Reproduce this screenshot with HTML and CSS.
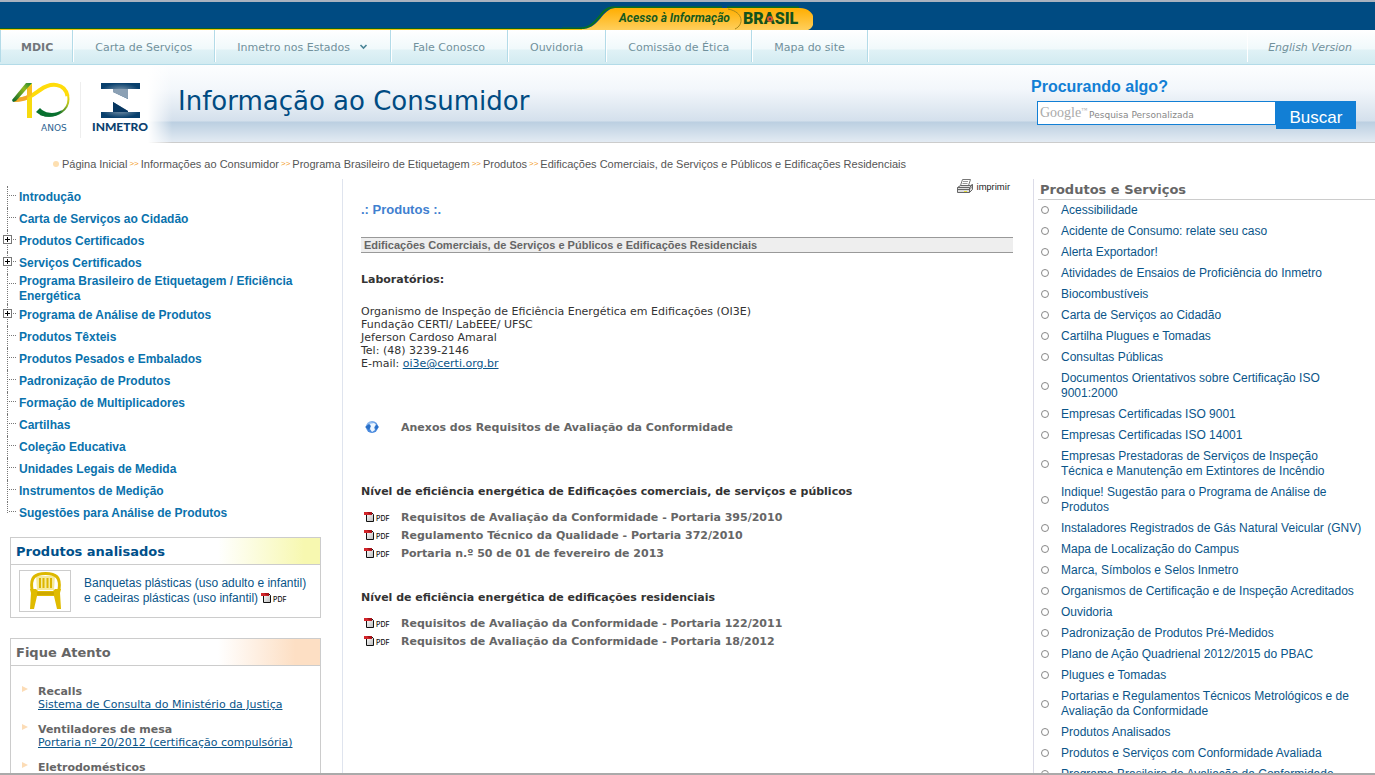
FILE: index.html
```html
<!DOCTYPE html>
<html lang="pt-BR">
<head>
<meta charset="utf-8">
<title>Inmetro - Informação ao Consumidor</title>
<link rel="stylesheet" href="styles.css">
</head>
<body>
<svg class="defs" aria-hidden="true">
  <defs>
    <linearGradient id="page-shade" x1="0" y1="0" x2="1" y2="1"><stop offset="0" stop-color="#fff"/><stop offset="1" stop-color="#bbb"/></linearGradient>
    <symbol id="pdf" viewBox="0 0 28 13">
      <path d="M2.500 1.500h5l2 2v7h-7z" fill="url(#page-shade)" stroke="#111"/>
      <path d="M0 1h8v3H0z" fill="#d3262b"/><path d="M3 1h5v3l-3-1z" fill="#a81218"/>
      <text x="12" y="10" class="pdf-text">PDF</text>
    </symbol>
  </defs>
</svg>
<div class="page">
  <div class="gov-bar">
    <div class="gov-line"></div>
    <a href="#" class="gov-link" aria-label="Acesso à Informação - Brasil">
      <svg width="251" height="28" viewBox="0 0 251 28">
        <defs><linearGradient id="gold" x1="0" y1="0" x2="0" y2="1"><stop offset="0" stop-color="#ffae00"/><stop offset="1" stop-color="#ffcf5c"/></linearGradient></defs>
        <path d="M0 26.500H18C36 26 38 6 50 5.500H160" fill="none" stroke="#0a7020" stroke-width="2"/>
        <path d="M165 5.500H237" stroke="#0a7020" stroke-width="2"/>
        <path d="M164 6H238C256 7 254 26 246 28H164z" fill="url(#gold)"/>
        <path d="M0 27H22C38 25 40 7 53 6H164C185 7 184 26 172 28H0z" fill="url(#gold)"/>
        <path d="M0 26H18V28H0z" fill="#004b82"/><path d="M0 26.500H20" stroke="#096320"/><path d="M0 27.500H20" stroke="#f2c20c"/>
        <path d="M166 7C182 10 182 23 173 27" fill="none" stroke="#a98718"/>
        <text x="57" y="20" class="gov-text">Acesso à Informação</text>
        <text x="181" y="22" class="brasil-text">BRASIL</text>
        <circle cx="208" cy="17" r="3" fill="#d9552b"/><circle cx="208" cy="17" r="1" fill="#173d66"/>
      </svg>
    </a>
    <div class="gov-rest"></div>
  </div>
  <nav class="top-nav">
    <a href="#" class="strong">MDIC</a>
    <a href="#">Carta de Serviços</a>
    <a href="#">Inmetro nos Estados <svg width="9" height="6" viewBox="0 0 9 6"><path d="M1.500 1l3 3 3-3" fill="none" stroke="#4a8597" stroke-width="1.600"/></svg></a>
    <a href="#">Fale Conosco</a>
    <a href="#">Ouvidoria</a>
    <a href="#">Comissão de Ética</a>
    <a href="#">Mapa do site</a>
    <a href="#" class="english">English Version</a>
  </nav>
  <header class="banner">
    <div class="logos">
      <svg width="58" height="56" viewBox="0 0 58 56" role="img" aria-label="Inmetro 40 anos">
        <defs>
          <linearGradient id="g40" x1="0" y1="1" x2="1" y2="0"><stop offset="0" stop-color="#00602c"/><stop offset=".65" stop-color="#8fb91e"/><stop offset="1" stop-color="#15803a"/></linearGradient>
          <linearGradient id="loop" x1="0" y1="0" x2="0" y2="1"><stop offset="0" stop-color="#ffdc0a"/><stop offset=".5" stop-color="#a7bd20"/><stop offset="1" stop-color="#086b30"/></linearGradient>
        </defs>
        <path d="M2 18C17 17 21 13 28 8 39 0 53 1 55.500 14" fill="none" stroke="#ffdc0a" stroke-width="4"/>
        <path d="M2 18C8 18 12 17 16 15" fill="none" stroke="#f3a62b" stroke-width="4"/>
        <path d="M15 5l5-4v35h-5z" fill="#f7da0e"/><path d="M15 6l5-3v10l-5 3z" fill="#f9bd20"/>
        <path d="M0 18L14 1h6L4 19 1 20z" fill="url(#g40)"/>
        <path d="M56 13C59 27 45 38 28 32" fill="none" stroke="url(#loop)" stroke-width="2"/>
        <path d="M24 30l4-4c4 5 14 7 22 2-4 8-18 9-26 2z" fill="#08702f"/>
        <text x="29" y="49" class="anos-text">ANOS</text>
      </svg>
      <span class="divider"></span>
      <svg width="60" height="52" viewBox="0 0 60 52" role="img" aria-label="Inmetro">
        <defs><radialGradient id="steel"><stop offset="0" stop-color="#8099ae"/><stop offset="1" stop-color="#083f6c"/></radialGradient></defs>
        <path d="M9 1h39v6H36v10L21 10V7H9z" fill="url(#steel)"/>
        <path d="M21 7h15v10L21 10z" fill="#8ba0b4"/>
        <path d="M9 30h12V20l15 9v1h12v6H9z" fill="url(#steel)"/>
        <path d="M21 20l15 9v1H21z" fill="#073660"/>
        <text x="0" y="49" class="inmetro-text">INMETRO</text>
      </svg>
    </div>
    <h1>Informação ao Consumidor</h1>
    <form class="search">
      <label for="q">Procurando algo?</label>
      <div class="search-row">
        <div class="search-box"><span class="google">Google<sup>™</sup></span><input id="q" type="text" placeholder="Pesquisa Personalizada"></div>
        <button type="button">Buscar</button>
      </div>
    </form>
  </header>
  <nav class="crumbs">
    <span class="dot"></span><a href="#">Página Inicial</a><i>&gt;&gt;</i><a href="#">Informações ao Consumidor</a><i>&gt;&gt;</i><a href="#">Programa Brasileiro de Etiquetagem</a><i>&gt;&gt;</i><a href="#">Produtos</a><i>&gt;&gt;</i><span>Edificações Comerciais, de Serviços e Públicos e Edificações Residenciais</span>
  </nav>
  <div class="columns">
    <aside class="left">
      <ul class="tree">
        <li><a href="#">Introdução</a></li>
        <li><a href="#">Carta de Serviços ao Cidadão</a></li>
        <li class="more"><a href="#">Produtos Certificados</a></li>
        <li class="more"><a href="#">Serviços Certificados</a></li>
        <li><a href="#">Programa Brasileiro de Etiquetagem / Eficiência Energética</a></li>
        <li class="more"><a href="#">Programa de Análise de Produtos</a></li>
        <li><a href="#">Produtos Têxteis</a></li>
        <li><a href="#">Produtos Pesados e Embalados</a></li>
        <li><a href="#">Padronização de Produtos</a></li>
        <li><a href="#">Formação de Multiplicadores</a></li>
        <li><a href="#">Cartilhas</a></li>
        <li><a href="#">Coleção Educativa</a></li>
        <li><a href="#">Unidades Legais de Medida</a></li>
        <li><a href="#">Instrumentos de Medição</a></li>
        <li><a href="#">Sugestões para Análise de Produtos</a></li>
      </ul>
      <section class="box green">
        <h2>Produtos analisados</h2>
        <div class="product">
          <svg class="chair" width="50" height="40" viewBox="0 0 50 40" role="img" aria-label="Cadeira plástica">
            <path d="M16 5h19l-1 14H17z" fill="#f6ea9c"/>
            <path d="M12 19C10 6 15 2.500 25.500 2.500S41 6 39 19" fill="none" stroke="#ddb800" stroke-width="3"/>
            <path d="M20 7v10M23.500 7v10M27.500 7v10M31 7v10" stroke="#dcb600" stroke-width="2"/>
            <path d="M10 18h6l2 2h15l2-2h6l-1 4 1 16h-4l-3-13H17l-3 13h-4l1-16z" fill="#e0bb00"/>
            <path d="M17 21h17v3H17z" fill="#cfa900"/>
          </svg>
          <a href="#">Banquetas plásticas (uso adulto e infantil)<br>e cadeiras plásticas (uso infantil) <svg class="pdf" role="img" aria-label="PDF"><use href="#pdf"/></svg></a>
        </div>
      </section>
      <section class="box orange">
        <h2>Fique Atento</h2>
        <ul class="alerts">
          <li><strong>Recalls</strong><a href="#">Sistema de Consulta do Ministério da Justiça</a></li>
          <li><strong>Ventiladores de mesa</strong><a href="#">Portaria nº 20/2012 (certificação compulsória)</a></li>
          <li><strong>Eletrodomésticos</strong></li>
        </ul>
      </section>
    </aside>
    <main>
      <a href="#" class="print">
        <svg width="16" height="15" viewBox="0 0 16 15"><path d="M5.500 .5h8l-2 6h-8z" fill="#fff" stroke="#777"/><path d="M6 2.500h5M5.500 4.500h5" stroke="#999"/><path d="M.5 8.500l3-2h10l2-1v5l-3 3H.5z" fill="#ddd" stroke="#666"/><path d="M.5 8.500h12l3-3M12.500 8.500v5M1 10.500h11l3-3" fill="none" stroke="#666"/><path d="M7 12.500h3" stroke="#e3dc3c"/></svg>
        imprimir</a>
      <h2 class="section-title">.: Produtos :.</h2>
      <h3 class="bar">Edificações Comerciais, de Serviços e Públicos e Edificações Residenciais</h3>
      <h4>Laboratórios:</h4>
      <p class="contact">Organismo de Inspeção de Eficiência Energética em Edificações (OI3E)<br>Fundação CERTI/ LabEEE/ UFSC<br>Jeferson Cardoso Amaral<br>Tel: (48) 3239-2146<br>E-mail: <a href="#">oi3e@certi.org.br</a></p>
      <ul class="docs annex">
        <li><svg class="globe" width="14" height="14" viewBox="0 0 14 14"><defs><radialGradient id="ball" cx=".4" cy=".3"><stop offset="0" stop-color="#b5d6fa"/><stop offset="1" stop-color="#4a8ade"/></radialGradient></defs><circle cx="7" cy="7" r="6" fill="url(#ball)"/><path d="M0 7l4-3 2 2-2 4z" fill="#2a70c8"/><path d="M5 4l4-1 3 2-3 2 1 3-3 2-2-3 1-3z" fill="#eef7ff"/><path d="M11 4l3 3-3 3-1-3z" fill="#2a70c8"/></svg><a href="#">Anexos dos Requisitos de Avaliação da Conformidade</a></li>
      </ul>
      <h4>Nível de eficiência energética de Edificações comerciais, de serviços e públicos</h4>
      <ul class="docs">
        <li><svg class="pdf"><use href="#pdf"/></svg><a href="#">Requisitos de Avaliação da Conformidade - Portaria 395/2010</a></li>
        <li><svg class="pdf"><use href="#pdf"/></svg><a href="#">Regulamento Técnico da Qualidade - Portaria 372/2010</a></li>
        <li><svg class="pdf"><use href="#pdf"/></svg><a href="#">Portaria n.º 50 de 01 de fevereiro de 2013</a></li>
      </ul>
      <h4>Nível de eficiência energética de edificações residenciais</h4>
      <ul class="docs">
        <li><svg class="pdf"><use href="#pdf"/></svg><a href="#">Requisitos de Avaliação da Conformidade - Portaria 122/2011</a></li>
        <li><svg class="pdf"><use href="#pdf"/></svg><a href="#">Requisitos de Avaliação da Conformidade - Portaria 18/2012</a></li>
      </ul>
    </main>
    <aside class="right">
      <h2>Produtos e Serviços</h2>
      <ul>
        <li><a href="#">Acessibilidade</a></li>
        <li><a href="#">Acidente de Consumo: relate seu caso</a></li>
        <li><a href="#">Alerta Exportador!</a></li>
        <li><a href="#">Atividades de Ensaios de Proficiência do Inmetro</a></li>
        <li><a href="#">Biocombustíveis</a></li>
        <li><a href="#">Carta de Serviços ao Cidadão</a></li>
        <li><a href="#">Cartilha Plugues e Tomadas</a></li>
        <li><a href="#">Consultas Públicas</a></li>
        <li><a href="#">Documentos Orientativos sobre Certificação ISO<br>9001:2000</a></li>
        <li><a href="#">Empresas Certificadas ISO 9001</a></li>
        <li><a href="#">Empresas Certificadas ISO 14001</a></li>
        <li><a href="#">Empresas Prestadoras de Serviços de Inspeção<br>Técnica e Manutenção em Extintores de Incêndio</a></li>
        <li><a href="#">Indique! Sugestão para o Programa de Análise de<br>Produtos</a></li>
        <li><a href="#">Instaladores Registrados de Gás Natural Veicular (GNV)</a></li>
        <li><a href="#">Mapa de Localização do Campus</a></li>
        <li><a href="#">Marca, Símbolos e Selos Inmetro</a></li>
        <li><a href="#">Organismos de Certificação e de Inspeção Acreditados</a></li>
        <li><a href="#">Ouvidoria</a></li>
        <li><a href="#">Padronização de Produtos Pré-Medidos</a></li>
        <li><a href="#">Plano de Ação Quadrienal 2012/2015 do PBAC</a></li>
        <li><a href="#">Plugues e Tomadas</a></li>
        <li><a href="#">Portarias e Regulamentos Técnicos Metrológicos e de<br>Avaliação da Conformidade</a></li>
        <li><a href="#">Produtos Analisados</a></li>
        <li><a href="#">Produtos e Serviços com Conformidade Avaliada</a></li>
        <li><a href="#">Programa Brasileiro de Avaliação da Conformidade</a></li>
      </ul>
    </aside>
  </div>
</div>
</body>
</html>
```
FILE: styles.css
```css
*, *::before, *::after { box-sizing: border-box; }
body {
  margin: 0;
  background: #fff;
  color: #333;
  font: 11px/13px "DejaVu Sans", Verdana, sans-serif;
}
ul, h1, h2, h3, h4, p { margin: 0; padding: 0; list-style: none; }
a { text-decoration: none; color: inherit; }
.defs { position: absolute; width: 0; height: 0; }
.page {
  display: flex;
  flex-direction: column;
  height: 100vh;
  overflow: hidden;
  border-top: 2px solid #a9b2bf;
  border-bottom: 2px solid #aaa;
}

/* government bar */
.gov-bar { display: flex; flex: none; height: 28px; background: #004b82; }
.gov-line, .gov-rest { flex: 1; }
.gov-line { background: linear-gradient(#004b82 26px, #096320 26px, #096320 27px, #f2c20c 27px); }
.gov-link svg { display: block; }
.gov-text { font: italic bold 12px Roboto, sans-serif; fill: #17591c; }
.brasil-text { font: 900 16px Roboto, sans-serif; fill: #14521c; }

/* top navigation */
.top-nav {
  display: flex;
  flex: none;
  height: 35px;
  padding-bottom: 2px;
  border-bottom: 1px solid #b3dbe8;
  background: linear-gradient(#fff, #f0f9fb 19px, #e0f2f6 20px, #d2ebf1);
  color: #71919c;
}
.top-nav a {
  display: flex;
  align-items: center;
  gap: 9px;
  padding: 2px 22px 0 22px;
  border-right: 1px solid #b3dbe8;
  box-shadow: 1px 0 #fff;
}
.top-nav .strong { padding: 2px 19px 0 20px; font-weight: bold; color: #71767a; border-left: 1px solid #b3dbe8; }
.top-nav .english { margin-left: auto; border: 0; box-shadow: -1px 0 #fff; font-style: italic; padding: 2px 23px 0 20px; }

/* banner */
.banner {
  display: flex;
  flex: none;
  height: 78px;
  border-bottom: 1px solid #ccc;
  background: linear-gradient(#fdfeff, #f3f7fb 24px, #d4e0ec 56px, #bbcfe1 57px, #e3ebf3);
}
.logos {
  display: flex;
  align-items: flex-start;
  width: 178px;
  height: 78px;
  padding: 17px 0 0 12px;
  background: linear-gradient(90deg, #fff 148px, transparent 172px);
}
.divider { width: 1px; height: 56px; margin: 0 11px 0 10px; background: #eee; }
.anos-text { font: 9px "DejaVu Sans", sans-serif; fill: #2c6391; }
.inmetro-text { font: 900 12px Lato, sans-serif; fill: #0b416f; }
.banner h1 { flex: 1; padding-top: 20px; font-size: 26px; line-height: 32px; font-weight: normal; color: #004b82; }
.search { width: 344px; padding-top: 13px; }
.search label { display: block; font: bold 16px/18px "Liberation Sans", Arial, sans-serif; color: #127fd5; }
.search-row { display: flex; align-items: flex-start; padding: 5px 19px 0 6px; }
.search-box { display: flex; flex: 1; align-items: center; min-width: 0; height: 24px; border: 1px solid #127fd5; background: #fff; padding-left: 2px; }
.google { font: 14px/20px "Liberation Serif", serif; color: #aaa; }
.google sup { font-size: 6px; line-height: 7px; vertical-align: 5px; }
.search input { flex: 1; min-width: 0; border: 0; padding: 3px 2px 0 2px; background: none; font: 9px/14px "DejaVu Sans", Verdana, sans-serif; outline: 0; }
.search input::placeholder { color: #888; opacity: 1; }
.search button { width: 80px; height: 28px; padding: 5px 0 0; border: 0; background: #127fd5; color: #fff; font: 17px/20px "Liberation Sans", Arial, sans-serif; }

/* breadcrumb */
.crumbs {
  display: flex;
  flex: none;
  align-items: center;
  height: 36px;
  padding: 6px 0 0 53px;
  font: 11px/14px "Liberation Sans", Arial, sans-serif;
  color: #555;
}
.crumbs i { margin: 0 2px; font-style: normal; font-size: 8px; color: #f39a1e; }
.crumbs .dot { width: 6px; height: 6px; margin-right: 3px; border-radius: 50%; background: #fddfb0; }

/* columns */
.columns { display: grid; grid-template-columns: 343px 1fr 342px; flex: 1; min-height: 0; overflow: hidden; }
.left { border-right: 1px solid #dfe4ee; }
.right { border-left: 1px solid #dcdce8; }

/* menu tree */
.tree { margin: 7px 0 0 7px; font: bold 12px/15px "Liberation Sans", Arial, sans-serif; color: #0a72ad; }
.tree li { position: relative; display: flex; align-items: center; min-height: 22px; width: 300px; padding-left: 12px; }
.tree li::before { content: ""; position: absolute; left: 0; top: 0; bottom: 0; border-left: 1px dotted #777; }
.tree li:last-child::before { bottom: 11px; }
.tree li::after { content: ""; position: absolute; left: 2px; top: 9px; width: 7px; border-top: 1px dotted #777; }
.tree .more a::before {
  content: "";
  position: absolute;
  z-index: 1;
  left: -4px;
  top: 5px;
  width: 9px;
  height: 9px;
  border: 1px solid #777;
  background: linear-gradient(#000, #000) center / 5px 1px no-repeat, linear-gradient(#000, #000) center / 1px 5px no-repeat, #fff;
}

/* side boxes */
.box { margin: 0 21px 0 10px; border: 1px solid #ccc; }
.box h2 { height: 27px; padding-left: 5px; border-bottom: 1px solid #ccc; font-size: 13px; line-height: 27px; }
.box.green { margin-top: 13px; }
.box.green h2 { color: #00508a; background: linear-gradient(90deg, #fff 67%, #f7f8b0 95%); }
.box.orange { margin-top: 20px; }
.box.orange h2 { color: #666; background: linear-gradient(90deg, #fff 67%, #fddfc4 92%); }
.product { display: flex; gap: 13px; padding: 5px 0 5px 8px; font: 12px/15px "Liberation Sans", Arial, sans-serif; color: #0a5589; }
.product .chair { flex: none; border: 1px solid #ccc; width: 52px; height: 42px; }
.product a { padding-top: 6px; }
.pdf { width: 28px; height: 13px; flex: none; }
.product .pdf { vertical-align: -3px; }
.pdf-text { font: 500 7px Inter, sans-serif; fill: #111; }
.alerts { padding: 19px 0 0 27px; }
.alerts li { position: relative; margin-bottom: 12px; }
.alerts li::before { content: ""; position: absolute; left: -16px; top: 1px; border: 3px solid transparent; border-left: 6px solid #fcdcb6; border-right: 0; }
.alerts strong { display: block; color: #666; }
.alerts a { color: #0a5589; text-decoration: underline; }

/* content */
main { padding: 0 20px 0 18px; }
.print { display: flex; align-items: center; justify-content: flex-end; gap: 3px; height: 15px; margin-right: 3px; font: 9px/12px Roboto, sans-serif; color: #222; }
.section-title { margin-top: 7px; font: bold 13px/18px "Liberation Sans", Arial, sans-serif; color: #4080d0; }
.bar { margin-top: 18px; padding-left: 3px; border: 1px solid #999; border-width: 1px 0; background: #eee; font: bold 11px/14px "Liberation Sans", Arial, sans-serif; color: #666; }
main h4 { margin-top: 20px; font-size: 11px; line-height: 13px; color: #333; }
.contact { margin-top: 19px; }
.contact a { color: #0a5589; text-decoration: underline; }
.docs { margin: 10px 0 29px; }
.docs li { display: flex; align-items: center; height: 18px; padding-left: 3px; gap: 9px; font-weight: bold; color: #666; }
.docs.annex { margin: 48px 0 49px; }
.docs .globe { margin: 0 13px 0 1px; }
.docs + h4 { margin-top: 0; }

/* services list */
.right h2 { margin-left: 4px; padding: 2px 0 0 2px; height: 21px; border-bottom: 1px solid #ccc; font-size: 13px; line-height: 17px; color: #666; }
.right ul { font: 12px/15px "Liberation Sans", Arial, sans-serif; color: #0a5589; }
.right li { display: flex; align-items: center; gap: 12px; padding: 3px 0 3px 7px; }
.right li::before { content: ""; flex: none; width: 8px; height: 8px; margin-bottom: 1px; border: 1px solid #888; border-radius: 50%; }
.right a { white-space: nowrap; }
```
